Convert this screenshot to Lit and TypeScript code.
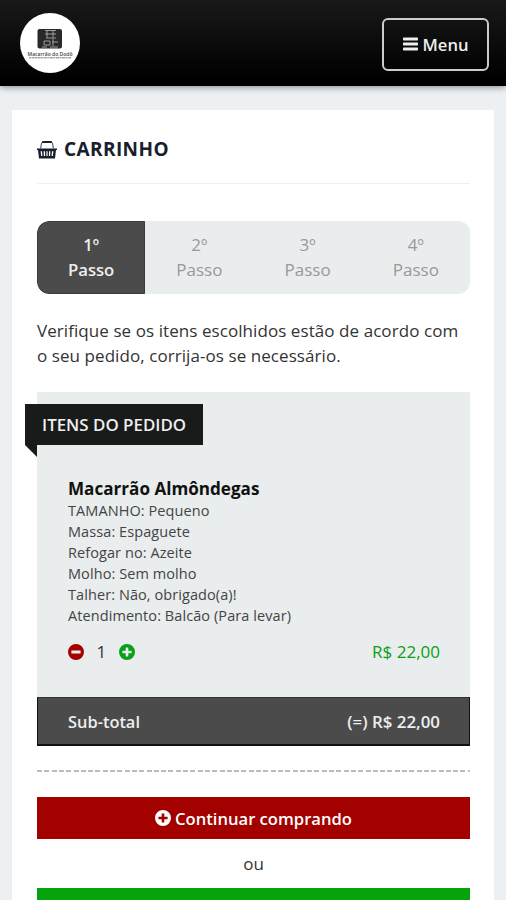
import { LitElement, html, css, svg } from "lit";
import { customElement } from "lit/decorators.js";

const circlePlus = html`<svg class="circle" viewBox="0 0 16 16">
  <path fill="currentColor" fill-rule="evenodd" d="M8 0a8 8 0 1 0 0 16A8 8 0 0 0 8 0ZM6.7 3.4h2.6v3.3h3.3v2.6H9.3v3.3H6.7V9.3H3.4V6.7h3.3Z"/>
</svg>`;
const circleMinus = html`<svg class="circle" viewBox="0 0 16 16">
  <path fill="currentColor" fill-rule="evenodd" d="M8 0a8 8 0 1 0 0 16A8 8 0 0 0 8 0ZM3.4 6.5h9.2v3H3.4Z"/>
</svg>`;

@customElement("app-root")
export class AppRoot extends LitElement {
  static styles = css`
    :host { display: block; height: 900px; overflow: hidden; background: #edf0f3; color: #333;
      font-family: "Open Sans", "Noto Sans", sans-serif; font-size: 17px; line-height: 25px; }
    * { box-sizing: border-box; }
    svg { display: block; flex: none; }
    header { height: 86px; padding: 0 17px 0 20px; display: flex; align-items: center; justify-content: space-between;
      background: linear-gradient(#191919, #000 92%); box-shadow: 0 1px 7px rgba(0,0,0,.45); }
    .logo { width: 60px; height: 60px; overflow: visible; }
    .menu { height: 53px; width: 107px; margin-top: 2px; border: 2px solid #ccc; border-radius: 6px; color: #eee; display: flex;
      align-items: center; justify-content: center; gap: 5px; font-weight: 600; font-size: 16.6px; }
    .bars { width: 15px; height: 14px; }
    main { margin: 24px 12px 0; padding: 0 24px 0 25px; height: 800px; background: #fff; }
    .title { height: 74px; padding-top: 27px; display: flex; gap: 7px; align-items: flex-start; border-bottom: 1px solid #f0f0f0;
      color: #17202d; font-weight: 700; font-size: 19px; }
    .title span { letter-spacing: .4px; }
    .basket { width: 20px; height: 20px; margin-top: 3px; }
    .steps { height: 73px; margin-top: 37px; display: grid; grid-template-columns: repeat(4, 1fr); border-radius: 12px;
      overflow: hidden; background: #e9edee; color: #999; text-align: center; }
    .step { padding-top: 12px; line-height: 24.5px; }
    .active { background: #4b4b4b; border: 1px solid #3a3a3a; border-radius: 12px 0 0 12px; padding-top: 11px; color: #eee;
      font-weight: 600; font-size: 16.7px; }
    .intro { margin: 24px 0 0; line-height: 25px; letter-spacing: .07px; white-space: nowrap; }
    .order { height: 305px; margin-top: 24px; padding: 12px 30px 0 31px; background: #e9edee; }
    .tag { position: relative; width: 178px; height: 41px; margin-left: -43px; padding-left: 17px; background: #191a1a;
      color: #eee; line-height: 41px; font-weight: 600; font-size: 16.9px; white-space: nowrap; }
    .tag::after { content: ""; position: absolute; left: 0; top: 41px; width: 12px; height: 12px; background: #191a1a;
      clip-path: polygon(0 0, 100% 0, 100% 100%); }
    .name { margin-top: 32px; height: 23px; line-height: 23px; color: #111; font-weight: 700; font-size: 17.1px; white-space: nowrap; }
    .options { font-size: 14.5px; letter-spacing: .08px; line-height: 21px; color: #444; white-space: nowrap; }
    .row { display: flex; align-items: center; justify-content: space-between; }
    .qty { margin-top: 13px; height: 25px; }
    .counter { display: flex; align-items: center; gap: 12.6px; }
    .circle { width: 16px; height: 16px; margin-top: 1px; }
    .minus { color: #a70000; }
    .plus, .price { color: #08a014; }
    .sub { height: 49px; padding: 0 29px 0 30px; background: #4b4b4b; border: 1px solid #303030; border-bottom: 2px solid #111;
      border-right-color: #111; border-left-color: #111; color: #eee; font-weight: 600; font-size: 16.4px; }
    .total { font-size: 16.9px; }
    .dash { height: 2px; margin: 24px 0 25px; background: repeating-linear-gradient(90deg, #bbb 0 5px, transparent 5px 7.3px); }
    .btn { height: 42px; display: flex; align-items: center; justify-content: center; gap: 4px; background: #a30000;
      color: #fff; font-weight: 600; font-size: 16.6px; }
    .btn .circle { margin-top: 0; }
    .or { height: 49px; line-height: 50px; text-align: center; }
    .go { background: #05a40b; }
  `;

  private logo() {
    return html`<svg class="logo" viewBox="0 0 60 60">
      <circle cx="30" cy="30" r="30" fill="#fff"/>
      <rect x="17.5" y="16" width="24.5" height="19.5" rx="2" fill="#292929"/>
      <g fill="none" stroke="#aaa" stroke-width=".9">
        <path d="M25 17.5h11M27 17.5v7m6-7v7M25 21h11M26 25h10M24 28h6v4h-6zm9-2v7m-1-4h6M22 34h5m3 0h8"/>
      </g>
      <text x="30" y="42.5" text-anchor="middle" textLength="45" lengthAdjust="spacingAndGlyphs" font-family="Open Sans" font-size="5.8" font-weight="600" fill="#444">Macarrão do Dodô</text>
      <path d="M9 44.8h42" stroke="#777" stroke-width="1" stroke-dasharray="2 .6 3 .5"/>
    </svg>`;
  }

  render() {
    const steps = ["1º", "2º", "3º", "4º"];
    const options = ["TAMANHO: Pequeno", "Massa: Espaguete", "Refogar no: Azeite", "Molho: Sem molho",
      "Talher: Não, obrigado(a)!", "Atendimento: Balcão (Para levar)"];
    return html`
      <header>
        ${this.logo()}
        <div class="menu">
          <svg class="bars" viewBox="0 0 15 14">${[0.5, 5.5, 10.5].map((y) => svg`<rect y=${y} width="15" height="3" rx=".7" fill="#eee"/>`)}</svg>
          <span>Menu</span>
        </div>
      </header>
      <main>
        <div class="title">
          <svg class="basket" viewBox="0 0 20 20">
            <path d="M3.6 8.500 4.400 3.800Q4.800 2 6.500 2h7q1.700 0 2.100 1.800l.8 4.700" fill="none" stroke="#4a566a" stroke-width="1.100"/>
            <path d="M6 2h8" stroke="#17202d" stroke-width="2" stroke-linecap="round"/>
            <path fill="#17202d" fill-rule="evenodd" d="M0 8.500h20v1.600h-1L18 18.500H2L1 10.100H0ZM3.600 11.200l.6 4.800h1.200l-.4-4.800Zm3 0 .3 4.800h1.200l-.1-4.800Zm2.800 0V16h1.200v-4.800Zm2.600 0-.1 4.800h1.200l.3-4.800Zm3 0-.4 4.800h1.200l.6-4.800Z"/>
          </svg>
          <span>CARRINHO</span>
        </div>
        <div class="steps">
          ${steps.map((s, i) => html`<div class="step ${i === 0 ? "active" : ""}">${s}<br>Passo</div>`)}
        </div>
        <p class="intro">Verifique se os itens escolhidos estão de acordo com<br>o seu pedido, corrija-os se necessário.</p>
        <section class="order">
          <div class="tag">ITENS DO PEDIDO</div>
          <div class="name">Macarrão Almôndegas</div>
          <div class="options">${options.map((o) => html`<div>${o}</div>`)}</div>
          <div class="row qty">
            <div class="counter"><span class="minus">${circleMinus}</span><span>1</span><span class="plus">${circlePlus}</span></div>
            <span class="price">R$ 22,00</span>
          </div>
        </section>
        <div class="row sub"><span>Sub-total</span><span class="total">(=) R$ 22,00</span></div>
        <div class="dash"></div>
        <div class="btn">${circlePlus}<span>Continuar comprando</span></div>
        <div class="or">ou</div>
        <div class="btn go"></div>
      </main>`;
  }
}
